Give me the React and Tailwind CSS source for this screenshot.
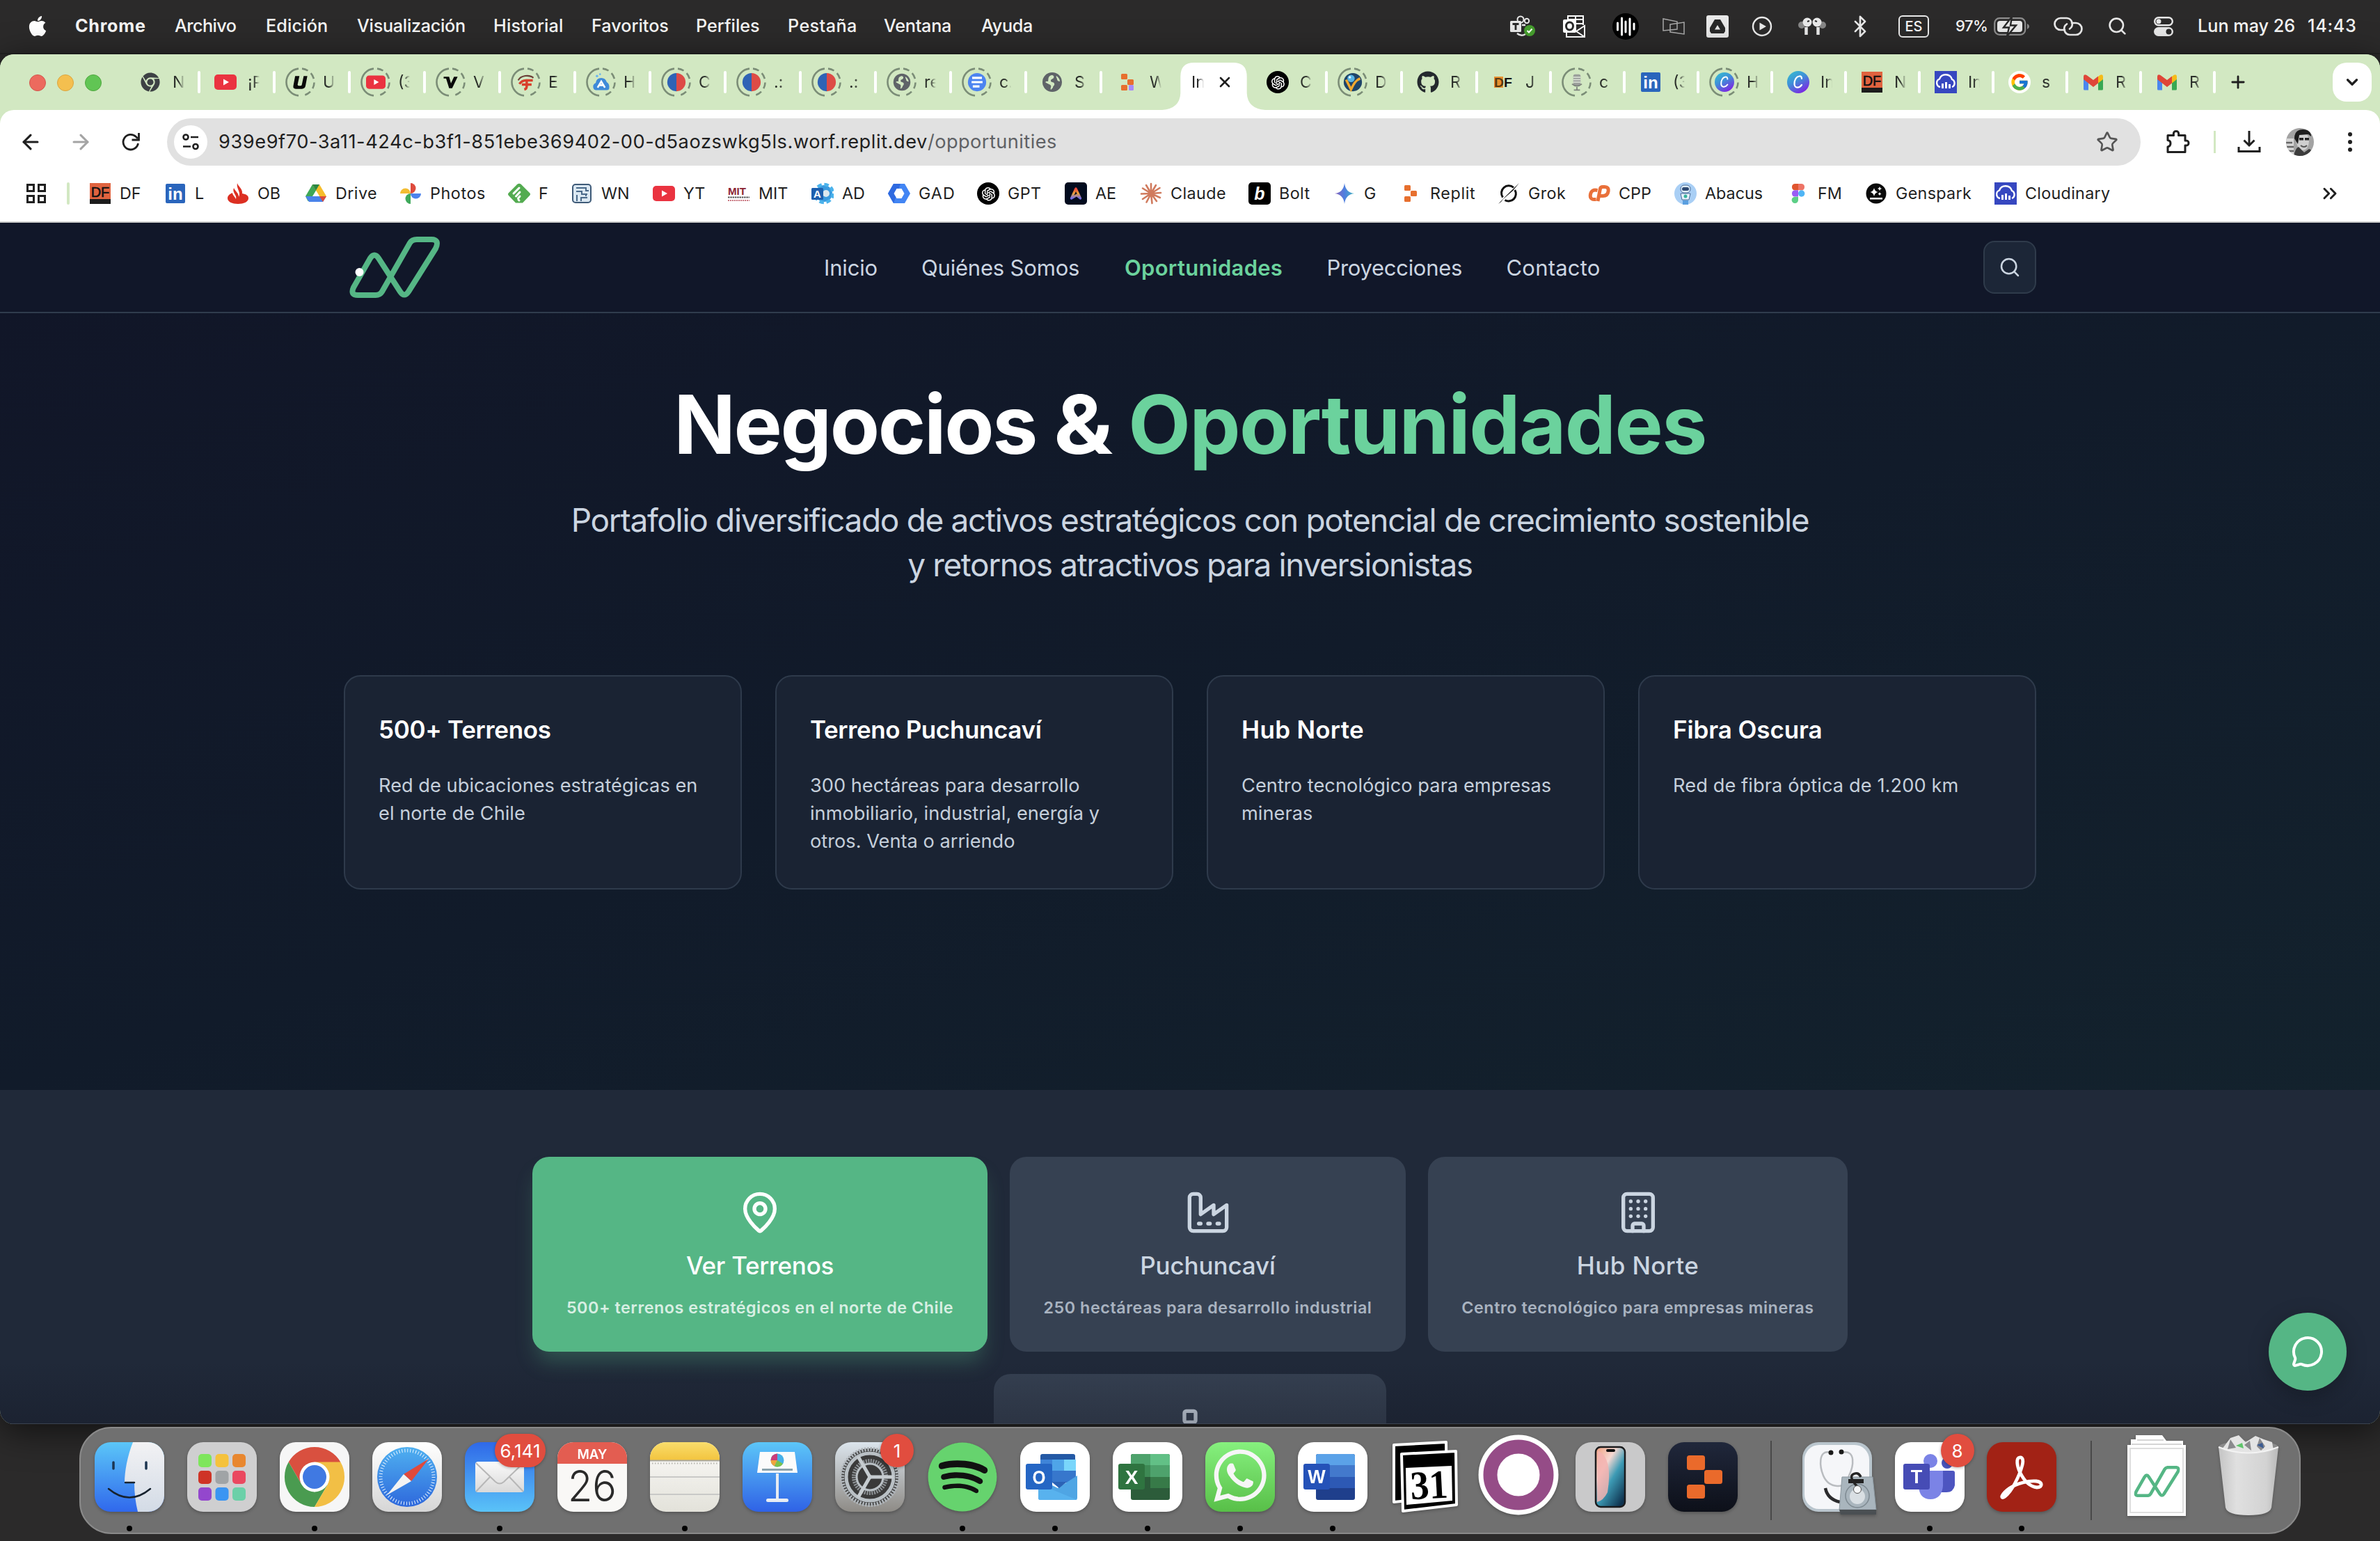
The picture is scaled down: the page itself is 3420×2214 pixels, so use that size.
import React from "react";
import { ArrowLeft, ArrowRight, Search, MapPin, Building, Network, MessageCircle, Bluetooth, ChevronDown, Plus, X, Star, ChevronsRight } from "lucide-react";
import { FaApple, FaChrome, FaGithub, FaSpotify, FaWhatsapp } from "react-icons/fa";
import { FcGoogle } from "react-icons/fc";
import { AiOutlineOpenAI } from "react-icons/ai";

const Svg = ({ s = "w-8 h-8", vb = "0 0 32 32", children, ...p }) => (
  <svg viewBox={vb} className={s + " shrink-0"} fill="none" {...p}>{children}</svg>
);

/* ---------- small brand marks ---------- */
const YouTube = ({ s }) => <Svg s={s}><rect y="5" width="32" height="22" rx="5" fill="#ea3340" /><path d="M13 11.5v9l8-4.500z" fill="#fff" /></Svg>;
const Globe = ({ s }) => <Svg s={s}><circle cx="16" cy="16" r="14" fill="#5f6368" /><path d="M15 6c3 0 4 2 3 4s-4 1-4 4 4 1 5 4-2 3-2 6l-3 3c-1-3 1-4 0-6s-4-2-8-5q2-2 4-1c1-3-1-7 5-9zM22 7c3 2 5 5 5 8-2 0-4-1-4-3s-2-3-1-5z" fill="#d2e8c2" /></Svg>;
const DFBox = ({ s }) => <Svg s={s}><rect x="1" y="1" width="30" height="30" fill="#e0633f" /><rect x="1" y="24" width="30" height="7" fill="#1c1c1c" /><text x="16" y="20.500" textAnchor="middle" fontFamily="Liberation Sans" fontSize="20" fill="#111" stroke="#111" strokeWidth=".6">DF</text></Svg>;
const DFText = ({ s }) => <Svg s={s}><rect x="3" y="8" width="13" height="16" fill="#e8912f" /><text x="3" y="23" fontFamily="Liberation Sans" fontSize="19" fontWeight="700" fill="#111" textLength="26" lengthAdjust="spacingAndGlyphs"><tspan fill="#5a3a12">D</tspan>F</text></Svg>;
const LinkedIn = ({ s }) => <Svg s={s}><rect x="2" y="2" width="28" height="28" rx="2" fill="#2a65bc" /><text x="16" y="25" textAnchor="middle" fontFamily="Liberation Sans" fontSize="24" fontWeight="700" fill="#fff">in</text></Svg>;
const RedBlue = ({ s }) => <Svg s={s}><path d="M16 1a15 15 0 0 0 0 30z" fill="#2f63b5" /><path d="M16 1a15 15 0 0 1 0 30z" fill="#dd4b46" /></Svg>;
const Docs = ({ s }) => <Svg s={s}><circle cx="16" cy="16" r="15" fill="#4d84f0" /><path d="M8 9h16M7 16h18M9 23h11" stroke="#fff" strokeWidth="3.500" /></Svg>;
const GPT = ({ s }) => <span className={(s || "w-8 h-8") + " flex shrink-0 items-center justify-center rounded-full bg-black text-white"}><AiOutlineOpenAI className="h-[78%] w-[78%]" /></span>;
const ReplitMark = ({ s, c = "#e76f2e", d = c }) => <Svg s={s}><rect x="7" y="4" width="9" height="8" rx="1.500" fill={c} /><rect x="16" y="12" width="9" height="8" rx="1.500" fill={c} /><rect x="7" y="20" width="9" height="8" rx="1.500" fill={c} />{d !== c && <rect x="18" y="20" width="7" height="8" rx="1.500" fill={d} />}</Svg>;
const WReplit = ({ s }) => <ReplitMark s={s} d="#a78bfa" />;
const UMark = ({ s }) => <Svg s={s}><path d="M7 6h7l-3 14q0 2 2 2h3q2 0 2-2l3-14h6l-3 16q-1 5-6 5H8q-5 0-4-5z" fill="#0a0a0a" /></Svg>;
const VMark = ({ s }) => <Svg s={s}><path d="M4 7h9l3 11 5-11h6l-9 19h-5L8 10H4z" fill="#0a0a0a" /></Svg>;
const EMark = ({ s }) => <Svg s={s}><path d="M3 13C7 5 21 3 28 9" stroke="#6b4038" strokeWidth="2.500" /><path d="M5 19Q9 13 16 13H27" stroke="#d8402c" strokeWidth="4" /><path d="M17 13V23Q17 27 13 28M9 20H25" stroke="#d8402c" strokeWidth="4" /></Svg>;
const HMark = ({ s }) => <Svg s={s}><path d="M3 26q-2-6 4-9 1-8 9-8 7 0 9 7 5 3 4 10 0 3-4 3H7q-3 0-4-3z" fill="#3f8ad8" /><circle cx="9" cy="6" r="2" fill="#6ab4ee" /><circle cx="14" cy="3" r="1.500" fill="#6ab4ee" /><path d="M10 25l6-10 6 10M12 21h8" stroke="#fff" strokeWidth="3" /></Svg>;
const Dom = ({ s }) => <Svg s={s}><circle cx="16" cy="16" r="15" fill="#1f4468" /><path d="M5 12l8 16c4-8 7-15 15-18" stroke="#f0a830" strokeWidth="4" /><circle cx="13" cy="10" r="6" fill="#58b4e4" /><circle cx="11" cy="8" r="2" fill="#e9f7ff" /></Svg>;
const Mic = ({ s }) => <Svg s={s}><rect x="10" y="3" width="12" height="19" rx="3" fill="#9b9f9b" /><path d="M10 8h12M10 12h12M10 16h12" stroke="#dfe6da" strokeWidth="1.500" /><path d="M8 19q8 7 16 0M16 24v5M11 29h10" stroke="#7c817b" strokeWidth="2" /></Svg>;
const Canva = ({ s }) => <Svg s={s}><defs><linearGradient id="cv" x1="0" y1="0" x2=".6" y2="1"><stop stopColor="#34c3cf" /><stop offset=".5" stopColor="#3f8fd8" /><stop offset="1" stopColor="#7a2be2" /></linearGradient></defs><circle cx="16" cy="16" r="16" fill="url(#cv)" /><path d="M21 11q0-4-3.500-3.500C13 8 10 14 10.500 19c.5 6 7 6 10.500 1" stroke="#fff" strokeWidth="2.200" strokeLinecap="round" /></Svg>;
const Cloudinary = ({ s }) => <Svg s={s}><rect width="32" height="32" fill="#3647c0" /><path d="M8 23a6 6 0 0 1-1-11.500A9.500 9.500 0 0 1 25 12a6 6 0 0 1 0 11" stroke="#fff" strokeWidth="2.400" /><path d="M11.500 18v7M16.500 16v9M21.500 19v6" stroke="#fff" strokeWidth="3" /></Svg>;
const Google = ({ s }) => <span className={(s || "w-8 h-8") + " flex items-center justify-center rounded-full bg-white"}><FcGoogle className="h-[28px] w-[28px]" /></span>;
const Gmail = ({ s }) => <Svg s={s}><path d="M2 9v17q0 1.500 1.500 1.500H9V14z" fill="#4a86ee" /><path d="M30 9v17q0 1.500-1.500 1.500H23V14z" fill="#37a853" /><path d="M23 8l2.500-2Q30 4 30 8v4l-7 5.500z" fill="#f5bb18" /><path d="M2 8q0-4 4.500-2L16 13l7-5.500V17.500L16 23l-7-5.500L2 12z" fill="#df4638" /></Svg>;
const Drive = ({ s }) => <Svg s={s}><path d="M11 3h10L8.500 26 4.500 27 1 20z" fill="#3fa757" /><path d="M11 3h10l10 17h-10z" fill="#f6bd2b" /><path d="M11 3h10l-5 8.500z" fill="#2c8643" /><path d="M1 20h30l-5 8H6z" fill="#4a83ea" /><path d="M31 20l-5 8-5-8z" fill="#dc4c3a" /><path d="M16 12l-5 8h10z" fill="#fff" /></Svg>;
const Photos = ({ s }) => <Svg s={s}><path d="M16 1a7.500 7.500 0 0 1 0 15z" fill="#de4b3d" /><path d="M31 16a7.500 7.500 0 0 1-15 0z" fill="#4c83ee" /><path d="M16 31a7.500 7.500 0 0 1 0-15z" fill="#3fa95b" /><path d="M1 16a7.500 7.500 0 0 1 15 0z" fill="#f3bd33" /></Svg>;
const Flame = ({ s }) => <Svg s={s}><path d="M15 1c1 5 8 8 7 15 6 1 9 3 9 7 0 5-7 8-15 8S1 28 1 23c0-4 3-6 7-8 0 3 4 6 5 9 2-6-6-9-3-16 2 5 7 7 7 13 4-7-4-12-2-20z" fill="#dc2f22" /></Svg>;
const Feedly = ({ s }) => <Svg s={s}><path d="M13 3q3-2.500 6 0l12 12q2 2 0 4L21 29.500H11L1 19q-2-2 0-4z" fill="#53ab50" /><path d="M16 8l-8 8M17 14l-5.500 6M17 20l-2.500 3M15 25l1 1" stroke="#fff" strokeWidth="3" strokeLinecap="round" /></Svg>;
const Circuit = ({ s }) => <Svg s={s}><rect x="3" y="3" width="26" height="26" rx="4" fill="#dbe8f2" stroke="#3e5a78" strokeWidth="2" /><path d="M8 8h14v4h4M8 13h8v4h8M9 27v-9M15 27v-5h9M22 17v3" stroke="#4a6a8a" strokeWidth="2" /></Svg>;
const MITMark = ({ s }) => <Svg s={s}><text x="0" y="18" fontFamily="Liberation Sans" fontSize="14" fontWeight="700" fill="#8b2332" textLength="26" lengthAdjust="spacingAndGlyphs">MIT</text><path d="M0 21.500h31" stroke="#555" strokeWidth="2.200" strokeDasharray="2.500 .8" /><path d="M0 26h31" stroke="#b94a57" strokeWidth="1.500" strokeDasharray="2 1" /></Svg>;
const Adapt = ({ s }) => <Svg s={s}><circle cx="18" cy="16" r="12" fill="#3a9ade" /><circle cx="18" cy="16" r="13" stroke="#4bb3ec" strokeWidth="4.500" strokeDasharray="6.500 3.710" /><circle cx="21" cy="16" r="5" fill="#dce7ee" /><rect y="8" width="17" height="17" rx="1.500" fill="#1d5fae" /><text x="8.500" y="22" textAnchor="middle" fontFamily="Liberation Sans" fontSize="15" fontWeight="700" fill="#fff">A</text></Svg>;
const Hexa = ({ s }) => <Svg s={s}><path d="M8 2h16l8 14-8 14H8L0 16z" fill="#4285f4" /><path d="M8 2h10L8 30 0 16z" fill="#2f6ae0" /><path d="M12.500 9h7l4 7-4 7h-7l-4-7z" fill="#fff" /></Svg>;
const AE = ({ s }) => <Svg s={s}><defs><linearGradient id="ae" x1="0" y1="0" x2="0" y2="1"><stop stopColor="#f0443a" /><stop offset=".5" stopColor="#e8a33a" /><stop offset="1" stopColor="#6f6bf0" /></linearGradient></defs><rect width="32" height="32" rx="5" fill="#020b1e" /><path d="M9.500 23L16 9l6.500 14-5.500-4.500z" stroke="url(#ae)" strokeWidth="3.400" strokeLinejoin="round" /></Svg>;
const Claude = ({ s }) => <Svg s={s}><g stroke="#d07b5e" strokeWidth="2.600" strokeLinecap="round"><path d="M16 16L16 2M16 16L23 4M16 16L28.500 8M16 16L30 15M16 16L29 22M16 16L24 27M16 16L17.500 30M16 16L9.500 28.500M16 16L4 24M16 16L2 16.500M16 16L4 8.500M16 16L9 4" /></g></Svg>;
const Bolt = ({ s }) => <Svg s={s}><rect width="32" height="32" rx="5" fill="#000" /><text x="16" y="25" textAnchor="middle" fontFamily="Liberation Sans" fontSize="25" fontWeight="700" fontStyle="italic" fill="#fff">b</text></Svg>;
const Gemini = ({ s }) => <Svg s={s}><defs><linearGradient id="gm" x1="0" y1="0" x2="1" y2="0"><stop stopColor="#8a63b8" /><stop offset=".5" stopColor="#4f7fe0" /><stop offset="1" stopColor="#45b5c0" /></linearGradient></defs><path d="M16 1q1.500 13.500 14 15-12.500 1.500-14 15-1.500-13.500-14-15 12.500-1.500 14-15z" fill="url(#gm)" /></Svg>;
const Grok = ({ s }) => <Svg s={s}><path d="M23 7.500A10.500 10.500 0 0 0 7.500 21.500M10.500 25.500A10.500 10.500 0 0 0 24.800 11" stroke="#111" strokeWidth="3" /><path d="M31 1L12 19.500 1 31Q6 28 8 24L22 12Z" fill="#111" /></Svg>;
const CPMark = ({ s }) => <Svg s={s}><path d="M13.500 11.500Q5 9.500 3.500 17T9 24.500H11.500M14 27L17.500 9Q18 6.500 21 6.500H24Q30 6.500 29 13T21.500 19.500H16" stroke="#e9703a" strokeWidth="5" strokeLinejoin="round" /></Svg>;
const Abacus = ({ s }) => <Svg s={s}><circle cx="16" cy="16" r="16" fill="#a9cff5" /><rect x="9" y="4" width="14" height="11" rx="5" fill="#dfeefc" stroke="#4a6a94" /><rect x="11" y="7" width="10" height="5" rx="2.500" fill="#2f4a72" /><path d="M9 16h14l-2 9H11z" fill="#e8f3fd" stroke="#4a6a94" /><circle cx="16" cy="20" r="2.500" fill="#35b39a" /><rect x="12" y="26" width="8" height="6" fill="#5a9fe0" /></Svg>;
const Figma = ({ s }) => <Svg s={s}><path d="M16 2h-5a4.700 4.700 0 0 0 0 9.300h5z" fill="#e0552f" /><path d="M16 2h5a4.700 4.700 0 0 1 0 9.300h-5z" fill="#ee7466" /><path d="M16 11.300h-5a4.700 4.700 0 0 0 0 9.300h5z" fill="#9a5cf5" /><circle cx="20.700" cy="16" r="4.700" fill="#4fb5f5" /><path d="M16 20.700h-5a4.700 4.700 0 1 0 5 4.700z" fill="#5ccf86" /></Svg>;
const Genspark = ({ s }) => <Svg s={s}><circle cx="16" cy="16" r="14.500" fill="#0a0a0a" /><path d="M13 8q1 5 5.500 6-4.500 1-5.500 6-1-5-5.500-6 4.500-1 5.500-6zM21 6q.5 2.500 3 3-2.500.5-3 3-.5-2.500-3-3 2.500-.5 3-3zM21 14q.5 2 2.500 2.500-2 .5-2.500 2.500-.5-2-2.500-2.500 2-.5 2.500-2.500zM7 22h18v2.500H7z" fill="#fff" /></Svg>;
const ChromeDark = () => <FaChrome className="h-[28px] w-[28px] text-[#3d4144]" />;
const Hub = () => <FaGithub className="h-[32px] w-[32px] text-[#24292e]" />;

const N_PATH = "M6 73L30 31Q36 22 42 31L73 79Q79 88 85 79L124 17Q130 4 118 4L97 4Q90 4 87 9L47 79Q44 84 38 84L12 84Q1 84 6 73Z";

/* ---------- menu bar ---------- */
const MENUS = [
  ["Chrome", "w-[143px] font-bold tracking-[0.7px]"],
  ["Archivo", "w-[131px] tracking-[-0.57px]"],
  ["Edición", "w-[131px] tracking-[0.13px]"],
  ["Visualización", "w-[196px] tracking-[-0.28px]"],
  ["Historial", "w-[141px] tracking-[0.14px]"],
  ["Favoritos", "w-[150px]"],
  ["Perfiles", "w-[132px]"],
  ["Pestaña", "w-[138px] tracking-[0.41px]"],
  ["Ventana", "w-[140px] tracking-[-0.26px]"],
  ["Ayuda", "w-[100px] tracking-[-0.34px]"],
];
const W = "#e8e8e8";
const STATUS = [
  ["w-[74px]", <Svg key="t" s="w-[38px] h-[32px]" vb="0 0 38 32"><circle cx="16" cy="6" r="4.500" stroke={W} strokeWidth="2" /><circle cx="25" cy="8" r="3.200" stroke={W} strokeWidth="2" /><path d="M11 26q6 5 12 1M18 14h5" stroke={W} strokeWidth="2.400" /><rect x="1" y="8" width="16" height="16" rx="1.500" fill={W} /><path d="M4.500 12.500h9M9 12v9" stroke="#292929" strokeWidth="2.800" /><circle cx="29" cy="22" r="8" fill="#469e2e" /><path d="M25.500 22l2.500 2.500 4.500-5" stroke="#fff" strokeWidth="2" /></Svg>],
  ["w-[74px]", <Svg key="o" s="w-[34px] h-[34px]" vb="0 0 34 34"><path d="M8 8V2h22v13M8 7h22M19 2v12M8 13h22M6 25v7h26V16l-12 8 12 8" stroke="#fff" strokeWidth="2" /><rect x="1" y="7" width="19" height="19" rx="2" fill="#fff" /><ellipse cx="10.500" cy="16.500" rx="5" ry="5.500" stroke="#292929" strokeWidth="3" /></Svg>],
  ["w-[74px]", <Svg key="w" s="w-[38px] h-[38px]" vb="0 0 38 38"><circle cx="19" cy="19" r="19" fill="#000" /><path d="M7.500 14v10M13.500 7v24M19 12v15M25 8v23M31 15v8" stroke="#fff" strokeWidth="3" strokeLinecap="round" /></Svg>],
  ["w-[64px]", <Svg key="d" s="w-[32px] h-[24px]" vb="0 0 32 24"><path d="M1 1l20 4v11L1 18zM11 9l20-3v17l-20-3z" stroke="#a9a9a9" strokeWidth="1.500" /></Svg>],
  ["w-[62px]", <Svg key="a" s="w-8 h-8"><rect width="32" height="32" rx="3" fill={W} /><path d="M12 6h8l7 12v5l-2 3H7l-2-3v-5z" fill="#292929" /><path d="M16 14l4 6.500h-8z" fill={W} /></Svg>],
  ["w-[66px]", <Svg key="p" s="w-[30px] h-[30px]" vb="0 0 30 30"><circle cx="15" cy="15" r="13" stroke={W} strokeWidth="2.400" /><path d="M11.500 9.500v11l9.500-5.500z" fill={W} /></Svg>],
  ["w-[78px]", <Svg key="e" s="w-[40px] h-[26px]" vb="0 0 40 26"><circle cx="5" cy="11" r="5" fill="#868686" /><circle cx="35" cy="11" r="5" fill="#868686" /><circle cx="13" cy="7" r="6.500" fill={W} /><circle cx="27" cy="7" r="6.500" fill={W} /><path d="M11.500 14v11M28.500 14v11" stroke={W} strokeWidth="4.500" /><path d="M13 6l3-1M27 6l-3-1" stroke="#292929" strokeWidth="2" /></Svg>],
  ["w-[60px]", <Bluetooth key="b" className="h-[34px] w-[34px] text-[#e8e8e8]" strokeWidth={1.9} />],
  ["w-[94px]", <span key="es" className="flex h-[32px] w-[44px] items-center justify-center rounded-[6px] border-[2px] border-[#e8e8e8] text-[20px] font-medium">ES</span>],
];

function MenuBar() {
  return (
    <div className="flex h-[76px] w-full shrink-0 items-center justify-between text-[25.2px] font-medium text-[#f4f4f4]">
      <div className="flex items-center pl-[38px] pb-px">
        <FaApple className="mr-[38px] h-[33px] w-[32px] text-white" />
        {MENUS.map(([t, c]) => <span key={t} className={c + " whitespace-nowrap"}>{t}</span>)}
      </div>
      <div className="flex w-[1269px] items-center">
        {STATUS.map(([c, n], i) => <span key={i} className={c + " flex shrink-0 items-center justify-center"}>{n}</span>)}
        <span className="flex w-[130px] shrink-0 items-center gap-[9px] pl-[13px]">
          <span className="w-[46px] text-[22px] tracking-[-0.5px]">97%</span>
          <Svg s="w-[52px] h-[26px]" vb="0 0 52 26"><rect x="1.200" y="1.200" width="44" height="23.600" rx="7" stroke="#8d8d8d" strokeWidth="2.200" /><path d="M48 9q3 1.500 3 4t-3 4z" fill="#8d8d8d" /><rect x="5" y="5" width="36" height="16" rx="4" fill={W} /><path d="M26-1L14 14.500h8L19 27l13-15.500h-8z" fill={W} stroke="#292929" strokeWidth="2.400" /></Svg>
        </span>
        <span className="flex w-[90px] shrink-0 justify-center">
          <Svg s="w-[44px] h-[28px]" vb="0 0 44 28"><path d="M17 19h-6a8.500 8.500 0 0 1 0-17h9a8.500 8.500 0 0 1 4 15.500M27 9h6a8.500 8.500 0 0 1 0 17h-9a8.500 8.500 0 0 1-4-15.500" stroke={W} strokeWidth="2.700" strokeLinecap="round" /></Svg>
        </span>
        <span className="flex w-[50px] shrink-0 justify-center"><Search className="h-[29px] w-[29px] text-[#e8e8e8]" strokeWidth={2.2} /></span>
        <span className="flex w-[84px] shrink-0 justify-center">
          <Svg s="w-[28px] h-[28px]" vb="0 0 28 28"><rect x="1.200" y="1.200" width="25.600" height="11" rx="5.500" stroke={W} strokeWidth="2.400" /><circle cx="7" cy="6.700" r="3.500" fill={W} /><rect y="15" width="28" height="13" rx="6.500" fill={W} /><circle cx="21.500" cy="21.500" r="4" fill="#292929" /></Svg>
        </span>
        <span className="w-[160px] shrink-0 whitespace-nowrap pb-px pl-[7px]">Lun may 26</span>
        <span className="pb-px pl-[5px] tracking-[0.7px]">14:43</span>
      </div>
    </div>
  );
}

/* ---------- tabs ---------- */
const BEFORE = [
  [ChromeDark, "N"], [YouTube, "¡P"], [UMark, "U", 1], [YouTube, "(3", 1], [VMark, "V", 1], [EMark, "E", 1], [HMark, "H", 1],
  [RedBlue, "C", 1], [RedBlue, ".:", 1], [RedBlue, ".:", 1], [Globe, "re", 1], [Docs, "c.", 1], [Globe, "S"], [WReplit, "W"],
];
const AFTER1 = [[GPT, "C"], [Dom, "D", 1], [Hub, "R"]];
const AFTER2 = [[DFText, "J"], [Mic, "c", 1], [LinkedIn, "(3"], [Canva, "H", 1], [Canva, "In"], [DFBox, "N"], [Cloudinary, "In"], [Google, "s"], [Gmail, "R"], [Gmail, "R"]];

function Tab({ item: [Icon, label, ring], wide, last }) {
  return (
    <div className={(wide ? "w-[108px]" : "w-[106px]") + " flex h-full shrink-0 items-center pl-[16px]"}>
      <span className="relative flex h-[44px] w-[44px] shrink-0 items-center justify-center">
        {ring && (
          <svg viewBox="0 0 44 44" className="absolute inset-0" fill="none" stroke="#7b8d77" strokeWidth="2.600">
            <path d="M19 2.600A19.500 19.500 0 0 0 19 41.400" />
            <path d="M24 2.600A19.500 19.500 0 0 1 24 41.400" strokeDasharray="9 5.500" />
          </svg>
        )}
        <Icon s={ring ? "w-[28px] h-[28px]" : "w-[32px] h-[32px]"} />
      </span>
      <span className="ml-[10px] w-[17px] overflow-hidden whitespace-nowrap text-[23.300px] text-[#2b2f2a] [mask-image:linear-gradient(to_right,black_50%,transparent)]">{label}</span>
      {!last && <span className="-mr-[2px] ml-auto h-[32px] w-[4px] rounded-full bg-white" />}
    </div>
  );
}

function TabStrip() {
  return (
    <div className="flex h-[80px] shrink-0 items-center bg-[#d2e8c2]">
      <div className="flex w-[178px] shrink-0 items-center gap-[16px] pl-[42px] pt-[2px]">
        <span className="h-[24px] w-[24px] rounded-full border border-[#d3574d] bg-[#ec6a5e]" />
        <span className="h-[24px] w-[24px] rounded-full border border-[#dba53f] bg-[#f4bf4f]" />
        <span className="h-[24px] w-[24px] rounded-full border border-[#50a83f] bg-[#61c554]" />
      </div>
      {BEFORE.map((t, i) => <Tab key={i} item={t} wide last={i === 13} />)}
      <div className="relative mt-[12px] flex h-[68px] w-[108px] shrink-0 items-center pb-[12px]">
        <svg viewBox="0 0 152 68" className="absolute -left-[20px] top-0 h-[68px] w-[148px]" preserveAspectRatio="none"><path d="M0 68Q26 66 27 44V20Q27 0 47 0H105Q125 0 125 20V44Q126 66 152 68Z" fill="#fff" /></svg>
        <span className="relative ml-[22px] w-[18px] overflow-hidden text-[23.300px] text-[#1f1f1f] [mask-image:linear-gradient(to_right,black_50%,transparent)]">In</span>
        <X className="relative ml-[18px] h-[24px] w-[24px] text-[#1f1f1f]" strokeWidth={2.6} />
      </div>
      {AFTER1.map((t, i) => <Tab key={i} item={t} wide />)}
      {AFTER2.map((t, i) => <Tab key={i} item={t} />)}
      <Plus className="ml-[20px] h-[28px] w-[28px] text-[#1f1f1f]" strokeWidth={2.4} />
      <span className="ml-auto mr-[12px] flex h-[56px] w-[56px] items-center justify-center rounded-[20px] bg-white"><ChevronDown className="h-[26px] w-[26px] text-[#1f1f1f]" strokeWidth={3} /></span>
    </div>
  );
}

function Toolbar() {
  return (
    <div className="flex h-[92px] shrink-0 items-center rounded-t-[20px] bg-white text-[#1f1f1f]">
      <ArrowLeft className="ml-[27px] h-[34px] w-[34px]" strokeWidth={2.2} />
      <ArrowRight className="ml-[38px] h-[34px] w-[34px] text-[#a4a4a4]" strokeWidth={2.2} />
      <Svg s="w-[28px] h-[28px] ml-[41px]" vb="0 0 28 28"><path d="M24.500 16A10.800 10.800 0 1 1 21.500 6.500L24 9" stroke="#1f1f1f" strokeWidth="2.800" /><path d="M25.500 1v10h-10" stroke="#1f1f1f" strokeWidth="2.800" /></Svg>
      <div className="ml-[38px] flex h-[68px] w-[2836px] items-center rounded-full bg-[#e1e1e1] pl-[10px]">
        <span className="flex h-[48px] w-[48px] shrink-0 items-center justify-center rounded-full bg-white">
          <Svg s="w-[26px] h-[26px]" vb="0 0 26 26" stroke="#1f1f1f" strokeWidth="2.600"><circle cx="6" cy="6" r="3.500" /><path d="M13 6h11" /><circle cx="20" cy="19.500" r="3.500" /><path d="M2 19.500h11" /></Svg>
        </span>
        <span className="ml-[16px] whitespace-nowrap pt-px text-[27.200px] tracking-[0.57px] text-[#1f1f1f]">939e9f70-3a11-424c-b3f1-851ebe369402-00-d5aozswkg5ls.worf.replit.dev<span className="tracking-[0.44px] text-[#5f6165]">/opportunities</span></span>
        <Star className="ml-auto mr-[32px] h-[32px] w-[32px] text-[#555]" strokeWidth={2} />
      </div>
      <Svg s="w-[38px] h-[38px] ml-[34px]" vb="0 0 38 38"><path d="M5 9.500h8.500q-1-6 3.500-6t3.500 6H30V17q5-.5 5 3.500t-5 3.500v9.500H5V26q4-1 4-5t-4-4.500z" stroke="#1f1f1f" strokeWidth="3" strokeLinejoin="round" /></Svg>
      <span className="ml-[33px] h-[32px] w-[3px] bg-[#d2e8c2]" />
      <Svg s="w-[34px] h-[34px] ml-[31px]" vb="0 0 34 34"><path d="M17 1v21M9.500 14.500L17 22l7.500-7.500M2 24v6.500h30V24" stroke="#1f1f1f" strokeWidth="3" /></Svg>
      <Svg s="w-[42px] h-[42px] ml-[35px]" vb="0 0 42 42"><defs><clipPath id="av"><circle cx="21" cy="21" r="20" /></clipPath></defs><g clipPath="url(#av)"><rect width="42" height="42" fill="#a3a3a3" /><path d="M0 16h12v26H0z" fill="#d8d8d8" /><path d="M0 22h10M0 28h12M0 34h12" stroke="#666" strokeWidth="2.500" /><ellipse cx="25" cy="20" rx="9" ry="13" fill="#cfcfcf" /><path d="M13 16Q13 3 25 3t12 10l-4-3-13 1-2 13z" fill="#1d1d1d" /><path d="M20 15h6v3.500h-6zM28 15h6v3.500h-6z" fill="#222" /><path d="M22 26q5 4 9 0" stroke="#555" strokeWidth="2" /><path d="M12 42q2-12 7-14l8 8 7-5q6 2 8 11z" fill="#3c3c3c" /></g></Svg>
      <Svg s="w-[8px] h-[30px] ml-[47px]" vb="0 0 8 30"><circle cx="4" cy="4" r="3" fill="#1f1f1f" /><circle cx="4" cy="15" r="3" fill="#1f1f1f" /><circle cx="4" cy="26" r="3" fill="#1f1f1f" /></Svg>
    </div>
  );
}

const MARKS = [
  [DFBox, "DF", "w-[108px]"], [LinkedIn, "L", "w-[90px]"], [Flame, "OB", "w-[112px]"], [Drive, "Drive", "w-[136px] tracking-[0.44px]"],
  [Photos, "Photos", "w-[156px] tracking-[0.6px]"], [Feedly, "F", "w-[90px]"], [Circuit, "WN", "w-[118px]"], [YouTube, "YT", "w-[108px]"],
  [MITMark, "MIT", "w-[120px]"], [Adapt, "AD", "w-[110px]"], [Hexa, "GAD", "w-[128px] tracking-[1px]"], [GPT, "GPT", "w-[126px] tracking-[0.37px]"],
  [AE, "AE", "w-[108px]"], [Claude, "Claude", "w-[156px] tracking-[0.44px]"], [Bolt, "Bolt", "w-[122px] tracking-[0.4px]"], [Gemini, "G", "w-[95px]"],
  [ReplitMark, "Replit", "w-[141px] tracking-[0.64px]"], [Grok, "Grok", "w-[130px] tracking-[0.4px]"], [CPMark, "CPP", "w-[124px]"],
  [Abacus, "Abacus", "w-[162px]"], [Figma, "FM", "w-[112px]"], [Genspark, "Genspark", "w-[186px] tracking-[0.32px]"], [Cloudinary, "Cloudinary", "w-[300px] tracking-[0.3px]"],
];
function Bookmarks() {
  return (
    <div className="flex h-[70px] shrink-0 items-center border-b-[2px] border-[#cfcfcf] bg-white pb-[12px] text-[23.300px] text-[#1f1f1f]">
      <Svg s="w-[28px] h-[28px] ml-[38px]" vb="0 0 28 28" stroke="#1f1f1f" strokeWidth="3"><path d="M1.500 1.500h9v9h-9zM17.500 1.500h9v9h-9zM1.500 17.500h9v9h-9zM17.500 17.500h9v9h-9z" /></Svg>
      <span className="ml-[30px] mr-[28px] h-[32px] w-[4px] rounded-full bg-[#d2e8c2]" />
      {MARKS.map(([Icon, t, c]) => (
        <div key={t} className={c + " flex shrink-0 items-center gap-[12px] whitespace-nowrap"}><Icon s="w-[32px] h-[32px]" />{t}</div>
      ))}
      <ChevronsRight className="ml-auto mr-[56px] h-[32px] w-[32px]" strokeWidth={2.2} />
    </div>
  );
}

/* ---------- page ---------- */
function PageHeader() {
  return (
    <div className="flex h-[130px] shrink-0 items-center border-b-[2px] border-[#303c4d] bg-[#111729] text-[31px] text-[#cbd5e1]">
      <svg viewBox="0 0 130 88" className="ml-[502px] h-[88px] w-[130px]" fill="none"><path d={N_PATH} stroke="#55b685" strokeWidth="8" strokeLinejoin="round" /><circle cx="14.500" cy="51" r="6" fill="#fff" /></svg>
      <nav className="ml-[552px] flex whitespace-nowrap pt-[2px]">
        <span className="w-[140px] tracking-[-0.15px]">Inicio</span>
        <span className="w-[292px] tracking-[-0.19px]">Quiénes Somos</span>
        <span className="w-[290.5px] font-semibold tracking-[0.26px] text-[#6bd29d]">Oportunidades</span>
        <span className="w-[258px] tracking-[-0.3px]">Proyecciones</span>
        <span className="w-[160px] tracking-[0.2px]">Contacto</span>
      </nav>
      <span className="ml-auto mr-[494px] flex h-[76px] w-[76px] items-center justify-center rounded-[16px] border-[2px] border-[#2f3b4b] bg-[#1c2637]"><Search className="h-[32px] w-[32px] text-[#cbd5e1]" strokeWidth={1.9} /></span>
    </div>
  );
}

const CARDS = [
  ["500+ Terrenos", "tracking-[-0.3px]", ["Red de ubicaciones estratégicas en", "el norte de Chile"], "tracking-[0.03px]"],
  ["Terreno Puchuncaví", "tracking-[-0.38px]", ["300 hectáreas para desarrollo", "inmobiliario, industrial, energía y", "otros. Venta o arriendo"], "tracking-[0.01px]"],
  ["Hub Norte", "tracking-[0.3px]", ["Centro tecnológico para empresas", "mineras"], "tracking-[0.05px]"],
  ["Fibra Oscura", "tracking-[-0.1px]", ["Red de fibra óptica de 1.200 km"], "tracking-[0.1px]"],
];

function Hero() {
  return (
    <div className="flex h-[1116px] shrink-0 flex-col items-center bg-gradient-to-br from-[#111628] via-[#111b2a] to-[#13222d] pt-[98px]">
      <h1 className="flex h-[120px] items-center whitespace-nowrap pt-[3px] text-[116.400px] font-bold leading-[120px] text-white">
        <span className="tracking-[-2.340px]">Negocios</span>
        <span className="ml-[25px] inline-block origin-left scale-x-[1.090]">&amp;</span>
        <span className="ml-[29px] tracking-[-1.650px] text-[#6bd29d]">Oportunidades</span>
      </h1>
      <p className="mt-[47px] text-center text-[46px] leading-[64px] tracking-[-1.330px] text-[#cbd5e1]">Portafolio diversificado de activos estratégicos con potencial de crecimiento sostenible<br /><span className="tracking-[-1.400px]">y retornos atractivos para inversionistas</span></p>
      <div className="mt-[127px] grid w-[2432px] grid-cols-4 gap-[48px]">
        {CARDS.map(([t, tc, lines, lc]) => (
          <div key={t} className="h-[308px] rounded-[24px] border-[2px] border-[#2e3a4b] bg-[#1a2333] p-[48px]">
            <h3 className={tc + " text-[35px] font-semibold leading-[56px] text-white"}>{t}</h3>
            <p className={lc + " mt-[33px] whitespace-nowrap text-[27.200px] leading-[40px] text-[#c5cfdb]"}>{lines.map((l) => <span key={l} className="block">{l}</span>)}</p>
          </div>
        ))}
      </div>
    </div>
  );
}

const FactoryIcon = ({ className }) => (
  <svg viewBox="0 0 24 24" className={className} fill="none" stroke="currentColor" strokeWidth="2" strokeLinecap="round" strokeLinejoin="round">
    <path d="M2 20a2 2 0 0 0 2 2h16a2 2 0 0 0 2-2V8l-7 5V8l-7 5V4a2 2 0 0 0-2-2H4a2 2 0 0 0-2 2Z" />
    <path d="M17 18h1M12 18h1M7 18h1" />
  </svg>
);

const ACTIONS = [
  [MapPin, "Ver Terrenos", "tracking-[-0.27px]", "500+ terrenos estratégicos en el norte de Chile", "w-[654px] bg-[#55b685] text-white shadow-[0_20px_30px_-6px_rgba(85,182,133,0.30)]", "tracking-[0.54px] text-[#d8efe3]"],
  [FactoryIcon, "Puchuncaví", "tracking-[-0.1px]", "250 hectáreas para desarrollo industrial", "w-[569px] bg-[#364152] text-[#cbd5e1]", "tracking-[0.57px] text-[#a9b3c0]"],
  [Building, "Hub Norte", "tracking-[0.4px]", "Centro tecnológico para empresas mineras", "w-[603px] bg-[#364152] text-[#cbd5e1]", "tracking-[0.56px] text-[#a9b3c0]"],
  [Network, "Fibra Oscura", "", "Red de fibra óptica de 1.200 km", "w-[564px] bg-[#364152] text-[#cbd5e1]", "text-[#a9b3c0]"],
];

function Actions() {
  return (
    <div className="relative h-[480px] shrink-0 overflow-hidden bg-[#202939]">
      <div className="mx-auto flex w-[1892px] flex-wrap justify-center gap-[32px] pt-[96px]">
        {ACTIONS.map(([Icon, t, tc, sub, c, sc]) => (
          <div key={t} className={c + " flex h-[280px] flex-col items-center whitespace-nowrap rounded-[24px] pt-[48px]"}>
            <Icon className="h-[64px] w-[64px] shrink-0" strokeWidth={2} />
            <span className={tc + " mt-[16px] text-[35px] font-medium leading-[56px]"}>{t}</span>
            <span className={sc + " mt-[17px] text-[23.300px] font-semibold leading-[32px]"}>{sub}</span>
          </div>
        ))}
      </div>
      <div className="absolute inset-x-0 bottom-0 h-[90px] border-b border-[#3a4350] bg-gradient-to-b from-transparent to-[rgba(16,18,30,0.28)]" />
      <span className="absolute bottom-[48px] right-[48px] flex h-[112px] w-[112px] items-center justify-center rounded-full bg-[#55b685] text-white shadow-[0_8px_30px_rgba(0,0,0,0.25)]"><MessageCircle className="h-[48px] w-[48px]" strokeWidth={2} /></span>
    </div>
  );
}

/* ---------- dock ---------- */
const D = ({ children, ...p }) => <svg viewBox="0 0 100 100" className="h-[100px] w-[100px] overflow-visible drop-shadow-[0_2px_2px_rgba(0,0,0,0.25)]" fill="none" {...p}>{children}</svg>;
const G = ({ id, a, b }) => <linearGradient id={id} x1="0" y1="0" x2="0" y2="1"><stop stopColor={a} /><stop offset="1" stopColor={b} /></linearGradient>;
const Tile = ({ fill }) => <rect width="100" height="100" rx="23" fill={fill} />;

const Finder = () => <D><defs><G id="fn" a="#5bc6f8" b="#3068ec" /><G id="fw" a="#f2f2f4" b="#d3dbe6" /><clipPath id="fc"><rect width="100" height="100" rx="23" /></clipPath></defs><g clipPath="url(#fc)"><rect width="100" height="100" fill="url(#fn)" /><path d="M55 0C47 20 43 42 43 58H57Q57 80 62 100H100V0Z" fill="url(#fw)" /></g><path d="M27 29v9M74 29v9" stroke="#1c3550" strokeWidth="3.500" strokeLinecap="round" /><path d="M20 67Q50 92 80 67M57 58H44" stroke="#16222e" strokeWidth="2.500" strokeLinecap="round" /></D>;
const LP = ["#7ee65c", "#f5c23c", "#e8872f", "#cf3426", "#a0a4a6", "#ea4960", "#9347cd", "#3b95f2", "#6bd0a8"];
const Launchpad = () => <D><Tile fill="#cfcfd0" />{LP.map((c, i) => <rect key={c} x={16 + (i % 3) * 24.5} y={17 + Math.floor(i / 3) * 24} width="19" height="19" rx="5" fill={c} />)}</D>;
const ChromeApp = () => <D><Tile fill="#f6f6f6" /><path d="M50 50L12.700 28.500A43 43 0 0 1 87.300 28.500Z" fill="#d9503f" /><path d="M31.400 60.700L12.700 28.500 50 28.500Z" fill="#d9503f" /><path d="M12.700 28.500L31.400 60.700 50 71.500 69 60.700 50 93A43 43 0 0 1 12.700 28.500Z" fill="#4a9b50" /><path d="M69 60.700L50 93A43 43 0 0 0 87.300 28.500H50Z" fill="#f2bf45" /><circle cx="50" cy="50" r="21.500" fill="#fff" /><circle cx="50" cy="50" r="17" fill="#4079e2" /></D>;
const Safari = () => <D><defs><G id="sf" a="#4fb0f0" b="#2e68dc" /><G id="sw" a="#ffffff" b="#d6d6d6" /></defs><Tile fill="url(#sw)" /><circle cx="50" cy="50" r="43" fill="url(#sf)" /><circle cx="50" cy="50" r="38" stroke="#e8f4ff" strokeWidth="5" strokeDasharray="1 2.980" /><path d="M81 24L56 56 45 46Z" fill="#e0493c" /><path d="M21 76L45 46 56 56Z" fill="#f3f3f3" /></D>;
const Mail = () => <D><defs><G id="ml" a="#2f69e8" b="#5ac3f8" /><G id="me" a="#fafafa" b="#d9d9d9" /></defs><Tile fill="url(#ml)" /><rect x="15" y="28" width="70" height="44" rx="4" fill="url(#me)" /><path d="M16 30L44 57Q50 62 56 57L84 30M16 71L36 50M84 71L64 50" stroke="#b7b7b7" strokeWidth="2" /></D>;
const Calendar = () => <D><defs><clipPath id="cc"><rect width="100" height="100" rx="23" /></clipPath></defs><g clipPath="url(#cc)"><rect width="100" height="100" fill="#f9f8f6" /><rect width="100" height="31" fill="#e35d51" /></g><text x="50" y="24" textAnchor="middle" fontFamily="Inter" fontWeight="600" fontSize="19" fill="#fff" textLength="43" lengthAdjust="spacingAndGlyphs">MAY</text><text x="50" y="84.500" textAnchor="middle" fontFamily="Inter" fontWeight="300" fontSize="62" fill="#2a2a2a" textLength="70" lengthAdjust="spacingAndGlyphs">26</text></D>;
const Notes = () => <D><defs><G id="ny" a="#f9dd6c" b="#f3c43e" /><G id="nw" a="#fbfaf8" b="#e3e2da" /><clipPath id="nc"><rect width="100" height="100" rx="23" /></clipPath></defs><g clipPath="url(#nc)"><rect width="100" height="100" fill="url(#nw)" /><rect width="100" height="26" fill="url(#ny)" /><path d="M0 26.500h100" stroke="#a9a79d" strokeWidth="2" /><path d="M3 30.500h94" stroke="#b5b4ad" strokeWidth="2" strokeDasharray="1.500 2.500" /><path d="M0 50h100M0 75h100" stroke="#c9c9c7" strokeWidth="1.800" /></g></D>;
const Keynote = () => <D><defs><G id="kn" a="#5cc6f8" b="#2f62e6" /></defs><Tile fill="url(#kn)" /><path d="M25 14H75L79 44H21Z" fill="#fbfbfb" /><path d="M28 38h44v3H28z" fill="#8ba3ad" /><circle cx="50" cy="26" r="9.500" fill="#46b0e8" /><path d="M50 26V16.500A9.500 9.500 0 0 0 40.500 26Z" fill="#ca3c7a" /><path d="M50 26H40.500A9.500 9.500 0 0 0 46 34.500Z" fill="#f0a53c" /><path d="M50 26L46 34.500A9.500 9.500 0 0 0 58 31Z" fill="#7cc24a" /><path d="M50 45V83" stroke="#e6ebf2" strokeWidth="4" /><rect x="34" y="81" width="32" height="5" rx="2.500" fill="#e9edf3" /></D>;
const Settings = () => <D><defs><G id="sg" a="#dbe4ec" b="#8e8b86" /></defs><Tile fill="url(#sg)" /><circle cx="50" cy="50" r="41" fill="#3a3a3a" /><circle cx="50" cy="50" r="40" stroke="#aeb4b9" strokeWidth="6" strokeDasharray="2.600 1.590" /><circle cx="50" cy="50" r="34" stroke="#b9c0c5" strokeWidth="5" /><circle cx="50" cy="50" r="23" stroke="#8d9296" strokeWidth="6" strokeDasharray="2 1.500" /><circle cx="50" cy="50" r="19" stroke="#b9c0c5" strokeWidth="3" /><circle cx="50" cy="50" r="3" fill="#b9c0c5" /><path d="M50 50H84M50 50L33 20.500M50 50L33 79.500" stroke="#c6ccd0" strokeWidth="5" /></D>;
const Spotify = () => <D><circle cx="50" cy="50" r="49" fill="#111" /><foreignObject x="-1" y="-1" width="102" height="102"><FaSpotify className="h-[102px] w-[102px] text-[#66d36e]" /></foreignObject></D>;
const Outlook = () => <D><Tile fill="#fff" /><rect x="29" y="17" width="50" height="34" rx="3" fill="#2459a5" /><rect x="29" y="25" width="17" height="34" fill="#3f84d8" /><rect x="46" y="25" width="17" height="17" fill="#4fa5e8" /><rect x="63" y="25" width="17" height="17" fill="#79d6fb" /><rect x="46" y="41" width="34" height="17" fill="#3777cc" /><path d="M26 52L54 66 82 48V80Q82 83 79 83H29Q26 83 26 80Z" fill="#4fa5e4" /><path d="M26 60L82 83H29Q26 83 26 80Z" fill="#58b2ee" /><path d="M45 57h22L56 66z" fill="#2b63b6" /><rect x="8" y="31" width="38" height="37" rx="3" fill="#2566c4" /><text x="27" y="60" textAnchor="middle" fontFamily="Liberation Sans" fontWeight="700" fontSize="28" fill="#fff" textLength="19" lengthAdjust="spacingAndGlyphs">O</text></D>;
const Excel = () => <D><Tile fill="#fff" /><rect x="26" y="17" width="56" height="66" rx="3" fill="#2c5c3a" /><path d="M26 20Q26 17 29 17H54V33H26Z" fill="#4ea26c" /><path d="M54 17H79Q82 17 82 20V33H54Z" fill="#62c086" /><path d="M26 33h28v17H26z" fill="#3e8a55" /><path d="M54 33h28v17H54z" fill="#4ea26c" /><path d="M54 50h28v16H54z" fill="#377a48" /><rect x="8" y="31" width="38" height="37" rx="3" fill="#2f7440" /><text x="27" y="60" textAnchor="middle" fontFamily="Liberation Sans" fontWeight="700" fontSize="28" fill="#fff">X</text></D>;
const WhatsApp = () => <D><defs><G id="wa" a="#86f07e" b="#58bf48" /></defs><Tile fill="url(#wa)" /><foreignObject x="7" y="5" width="88" height="88"><FaWhatsapp className="h-[86px] w-[86px] text-[#f6f6f6]" /></foreignObject></D>;
const Word = () => <D><Tile fill="#fff" /><rect x="26" y="17" width="56" height="66" rx="3" fill="#1f3f8c" /><path d="M26 20Q26 17 29 17H79Q82 17 82 20V33H26Z" fill="#5ba2e8" /><path d="M26 33h56v17H26z" fill="#4379cc" /><path d="M26 50h56v16H26z" fill="#2d59b4" /><rect x="8" y="31" width="38" height="37" rx="3" fill="#2552b8" /><text x="27" y="59" textAnchor="middle" fontFamily="Liberation Sans" fontWeight="700" fontSize="27" fill="#fff">W</text></D>;
const Notion = () => <D><path d="M5 4L80 0 81 78 5 86Z" fill="#000" stroke="#fff" strokeWidth="4" strokeLinejoin="round" /><path d="M16 17L94 13 95 90 18 99Z" fill="#000" stroke="#fff" strokeWidth="4" strokeLinejoin="round" /><path d="M22 37L88 34 89 84 23 90Z" fill="#fff" /><text x="55.500" y="81" textAnchor="middle" fontFamily="Liberation Serif" fontWeight="700" fontSize="58" fill="#000" textLength="54" lengthAdjust="spacingAndGlyphs" transform="rotate(-3 55 62)">31</text></D>;
const Ring = () => <D><circle cx="51" cy="47" r="57.500" fill="#fff" /><circle cx="51" cy="47" r="40.500" stroke="#954c87" strokeWidth="20" /></D>;
const Phone = () => <D><defs><linearGradient id="ph" x1="0" y1="0" x2=".8" y2="1"><stop stopColor="#f0a07e" /><stop offset=".35" stopColor="#f5d8d2" /><stop offset=".6" stopColor="#3d9bb5" /><stop offset="1" stopColor="#0f3350" /></linearGradient></defs><Tile fill="#c9c9ca" /><rect x="29" y="7" width="42" height="86" rx="7" fill="url(#ph)" stroke="#1b1b1d" strokeWidth="2.500" /><path d="M32 12q22 10 14 60Q40 84 31 86Z" fill="#f3b3b0" opacity=".85" /><rect x="44" y="10" width="13" height="4" rx="2" fill="#111" /></D>;
const ReplitApp = () => <D><defs><G id="rp" a="#20273b" b="#0d1019" /></defs><Tile fill="url(#rp)" /><rect x="27" y="19" width="26" height="21" rx="3.500" fill="#ea6a2b" /><rect x="52" y="40" width="26" height="20" rx="3.500" fill="#ea6a2b" /><rect x="27" y="61" width="26" height="20" rx="3.500" fill="#ea6a2b" /></D>;
const Doctor = () => <D><rect width="100" height="100" rx="23" fill="#b9c5cd" /><rect x="3" y="4" width="93" height="92" rx="21" fill="#f5f6f9" /><path d="M40 15C22 10 25 36 30 48Q36 62 50 63T67 48C73 36 78 10 57 15" stroke="#b9bcc0" strokeWidth="2.500" /><path d="M33 66Q36 82 54 86" stroke="#2b2b2d" strokeWidth="4.500" /><circle cx="41" cy="15" r="3.500" fill="#1a1a1a" /><circle cx="56" cy="14" r="3.500" fill="#1a1a1a" /><path d="M57 50H101L106 97H53Z" fill="#a9b5bd" stroke="#8b979f" /><path d="M53 97h53v7H55z" fill="#4a4f53" /><rect x="66" y="53" width="22" height="6" fill="#222" /><circle cx="79" cy="77" r="17" stroke="#7e8a92" strokeWidth="1.500" /><circle cx="79" cy="78" r="11" fill="#d9dfe3" /><path d="M79 64Q66 50 73 46T84 50" stroke="#242424" strokeWidth="3.500" /><circle cx="79" cy="68" r="5.500" fill="#f5f7f8" stroke="#555" /></D>;
const Teams = () => <D><Tile fill="#fff" /><circle cx="51" cy="27" r="10" fill="#7b83e6" /><circle cx="75" cy="30" r="8" fill="#4a53bb" /><path d="M66 41H83Q86 41 86 44V62Q84 72 74 72H66Z" fill="#4d55c0" /><path d="M34 41H69V63Q67 82 51 82T34 63Z" fill="#7b83e6" /><rect x="12" y="31" width="38" height="37" rx="3" fill="#464cb5" /><text x="31" y="59" textAnchor="middle" fontFamily="Liberation Sans" fontWeight="700" fontSize="27" fill="#fff">T</text></D>;
const Acrobat = () => <D><Tile fill="#a22215" /><path d="M47 22C42 23 43 34 48 44C54 56 62 64 72 65C81 65 80 57 71 56C60 55 44 59 33 66C20 75 19 83 26 78C36 71 47 48 51 33C53 25 51 21 47 22Z" stroke="#fff" strokeWidth="4.800" strokeLinejoin="round" /></D>;
const Pages = () => <D><path d="M20-10H58L64-2H88V4H92V106H8V4H13V-4H20Z" fill="#fff" /><path d="M14 3H86M22-3H60" stroke="#d5d5d5" strokeWidth="2" /><rect x="12" y="9" width="76" height="92" stroke="#dedede" strokeWidth="2" /><svg x="17.500" y="34" width="66" height="45" viewBox="0 0 130 88"><path d={N_PATH} stroke="#55b685" strokeWidth="9" strokeLinejoin="round" /></svg></D>;
const Trash = () => <D><defs><linearGradient id="tr" x1="0" x2="1"><stop stopColor="#c9c9c9" /><stop offset=".3" stopColor="#e6e6e6" /><stop offset=".8" stopColor="#d8d8d8" /><stop offset="1" stopColor="#bdbdbd" /></linearGradient></defs><ellipse cx="50" cy="7" rx="43" ry="9" fill="#8a8a8a" /><path d="M12 10L24-6 36-10 46 0 60-9 72-4 84 0 86 12Q50 20 14 12Z" fill="#e4e4e4" /><path d="M24-4l8 12-12 2zM44 4l8-6 2 14zM66-6l8 12-6 6-6-6z" fill="#8a8a8d" /><path d="M32 5l9-4 2 8z" fill="#5fc46a" /><path d="M62 4l8-3 2 8z" fill="#3c5c93" /><path d="M7 7Q50 24 93 7L83 94Q80 105 50 105T17 94Z" fill="url(#tr)" opacity=".96" /><path d="M7 7Q50 24 93 7" stroke="#f3f3f3" strokeWidth="2" /></D>;

const APPS = [[Finder, 1], [Launchpad], [ChromeApp, 1], [Safari], [Mail, 1, "6,141"], [Calendar], [Notes, 1], [Keynote], [Settings, 0, "1"], [Spotify, 1], [Outlook, 1], [Excel, 1], [WhatsApp, 1], [Word, 1], [Notion], [Ring], [Phone], [ReplitApp]];
const APPS2 = [[Doctor], [Teams, 1, "8"], [Acrobat, 1]];
const APPS3 = [[Pages], [Trash]];

function DockItem({ app: [Icon, open, badge], w = "w-[133px]" }) {
  return (
    <div className={w + " relative flex shrink-0 flex-col items-center pt-[20px]"}>
      <Icon />
      {badge && <span className={(badge.length > 1 ? "left-[60px] w-[73px]" : "left-[82px] w-[48px]") + " absolute top-[8px] flex h-[48px] items-center justify-center rounded-full bg-[#e14d3f] text-[26px] text-white shadow-[0_1px_4px_rgba(0,0,0,0.3)]"}>{badge}</span>}
      {open ? <span className="mt-[20px] h-[8px] w-[8px] rounded-full bg-black" /> : null}
    </div>
  );
}
const Divider = ({ m }) => <span className={m + " mt-[18px] h-[114px] w-[2px] shrink-0 bg-[#494949]"} />;

function Dock() {
  return (
    <div className="ml-[114px] mt-[4px] flex h-[154px] w-[3192px] shrink-0 rounded-[46px] border-[2px] border-[#8a8a8a] bg-[#707070] pl-[3px]">
      {APPS.map((a, i) => <DockItem key={i} app={a} />)}
      <Divider m="ml-[31px] mr-[28px]" />
      {APPS2.map((a, i) => <DockItem key={i} app={a} w="w-[132.5px]" />)}
      <Divider m="ml-[32px] mr-[27px]" />
      {APPS3.map((a, i) => <DockItem key={i} app={a} w="w-[132px]" />)}
    </div>
  );
}

export default function App() {
  return (
    <div className="flex h-[2214px] w-[3420px] flex-col overflow-hidden bg-[#2b2a2a] font-['Inter','Liberation_Sans',sans-serif]">
      <MenuBar />
      <div className="h-[2px] shrink-0 bg-[#222222]" />
      <div className="flex h-[1968px] shrink-0 flex-col overflow-hidden rounded-[20px] bg-[#d2e8c2] shadow-[0_10px_50px_rgba(0,0,0,0.6)]">
        <TabStrip />
        <Toolbar />
        <Bookmarks />
        <PageHeader />
        <Hero />
        <Actions />
      </div>
      <Dock />
    </div>
  );
}
